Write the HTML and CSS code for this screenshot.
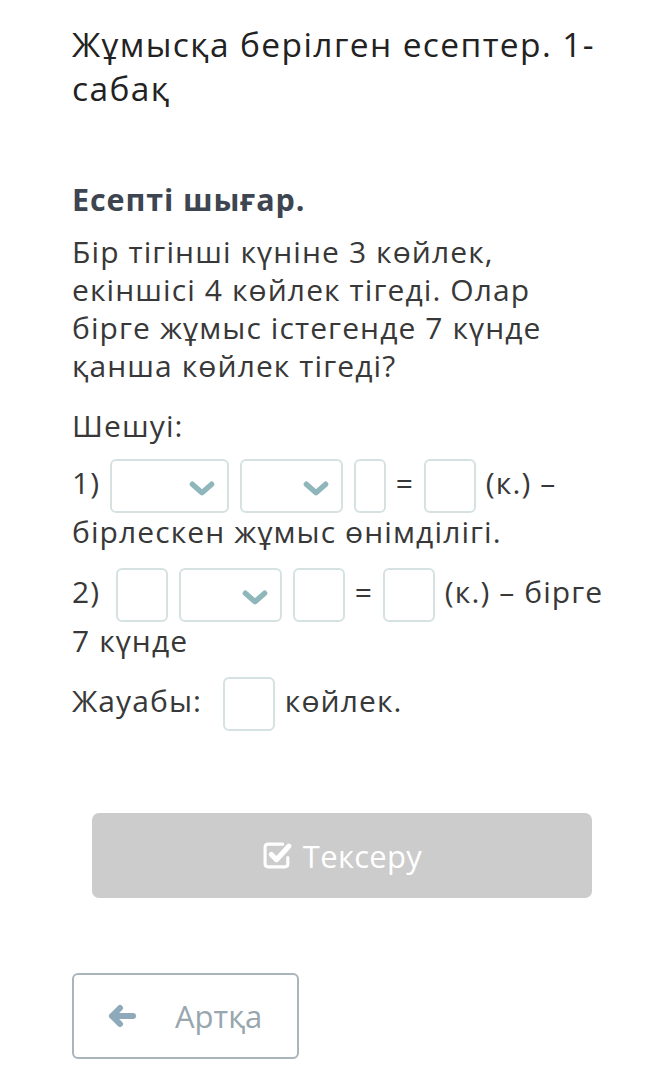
FILE: index.html
```html
<!DOCTYPE html>
<html lang="kk">
<head>
  <meta charset="UTF-8">
  <meta name="viewport" content="width=device-width, initial-scale=1.0">
  <title>Жұмысқа берілген есептер</title>
  <link rel="stylesheet" href="styles.css">
</head>
<body>
  <div class="page">
    <!-- lesson title -->
    <h1 class="lesson-title">Жұмысқа берілген есептер. 1-сабақ</h1>

    <!-- task -->
    <div class="task">
      <h2 class="task-head">Есепті шығар.</h2>
      <p class="task-text">Бір тігінші күніне 3 көйлек, екіншісі 4 көйлек тігеді. Олар бірге жұмыс істегенде 7 күнде қанша көйлек тігеді?</p>
      <p class="task-text solution">Шешуі:</p>

      <p class="task-row">1) <span class="box select wide"><svg class="chev" viewBox="0 0 24 14"><path d="M3 3 L12 11 L21 3"/></svg></span> <span class="box select"><svg class="chev" viewBox="0 0 24 14"><path d="M3 3 L12 11 L21 3"/></svg></span> <span class="box narrow"></span> = <span class="box"></span> (к.) – бірлескен жұмыс өнімділігі.</p>

      <p class="task-row">2) <span class="box first"></span> <span class="box select"><svg class="chev" viewBox="0 0 24 14"><path d="M3 3 L12 11 L21 3"/></svg></span> <span class="box"></span> = <span class="box"></span> (к.) – бірге 7 күнде</p>

      <p class="task-row">Жауабы: <span class="box answer"></span> көйлек.</p>
    </div>

    <button class="check-button" disabled>
      <svg class="check-icon" viewBox="0 0 30 28">
        <path class="box-line" d="M20 3 H6 Q3 3 3 6 V22 Q3 25 6 25 H22 Q25 25 25 22 V16"/>
        <path class="tick" d="M9 13 L14 18 L26 5"/>
      </svg>
      Тексеру
    </button>

    <button class="back-button">
      <svg class="back-icon" viewBox="0 0 30 24"><path d="M5 12 H26 M13 4 L5 12 L13 20"/></svg>
      Артқа
    </button>
  </div>
</body>
</html>
```

FILE: styles.css
```css
body {
  margin: 0;
  background: #fff;
  font-family: "Open Sans", "Noto Sans", sans-serif;
}

.page {
  padding: 22px 42px 40px 72px;
}

.lesson-title {
  margin: 0;
  font-size: 33.5px;
  line-height: 44px;
  letter-spacing: 1.4px;
  font-weight: 400;
  color: #222;
}

.task {
  margin-top: 70px;
}

.task-head {
  margin: 0 0 15px;
  font-size: 30.5px;
  line-height: 38px;
  letter-spacing: 0.9px;
  font-weight: 700;
  color: #3d4550;
}

.task-text,
.task-row {
  margin: 0 0 22px;
  font-size: 30px;
  line-height: 38px;
  letter-spacing: 1.1px;
  color: #383838;
}

.task-text.solution {
  margin-bottom: 14px;
}

.task-row {
  margin-bottom: 17px;
}

.box {
  display: inline-block;
  box-sizing: border-box;
  position: relative;
  width: 52px;
  height: 54px;
  margin: 0 1px;
  border: 2px solid #d6e2e2;
  border-radius: 6px;
  vertical-align: middle;
}

.box.narrow {
  width: 32px;
}

.box.select {
  width: 103px;
}

.box.select.wide {
  width: 119px;
}

.box.first {
  margin-left: 7px;
}

.box.answer {
  margin: 0 1px 0 12px;
}

.chev {
  position: absolute;
  right: 12px;
  top: 20px;
  width: 26px;
  height: 15px;
  fill: none;
  stroke: #8fb6bb;
  stroke-width: 5;
  stroke-linecap: round;
  stroke-linejoin: round;
}

.check-button {
  display: flex;
  align-items: center;
  justify-content: center;
  gap: 10px;
  width: 500px;
  height: 85px;
  margin: 82px 0 0 20px;
  border: none;
  border-radius: 7px;
  background: #cccccc;
  color: #fff;
  font-family: inherit;
  font-size: 31px;
  letter-spacing: 0.3px;
}

.check-icon {
  width: 31px;
  height: 29px;
  fill: none;
  stroke: #fff;
  stroke-linecap: round;
  stroke-linejoin: round;
}

.check-icon .box-line {
  stroke-width: 3;
}

.check-icon .tick {
  stroke-width: 5;
}

.back-button {
  display: flex;
  align-items: center;
  gap: 38px;
  width: 227px;
  height: 86px;
  margin-top: 75px;
  padding: 0 0 0 33px;
  border: 2px solid #a8b5ba;
  border-radius: 6px;
  background: #fff;
  color: #98a6ae;
  font-family: inherit;
  font-size: 31px;
}

.back-icon {
  width: 30px;
  height: 24px;
  fill: none;
  stroke: #8ea9ba;
  stroke-width: 6;
  stroke-linecap: round;
  stroke-linejoin: round;
}
```
